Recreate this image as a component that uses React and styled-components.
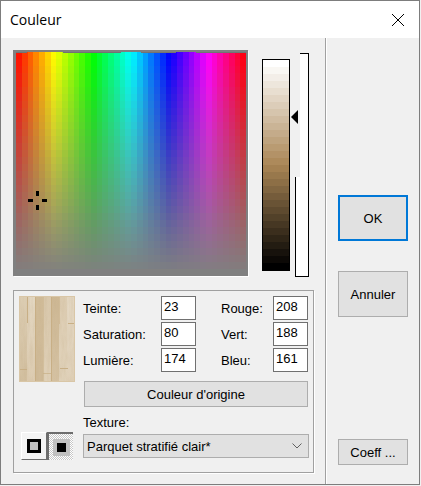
import { Fragment } from "react";
import styled, { createGlobalStyle } from "styled-components";

const GlobalStyle = createGlobalStyle`
  html, body {
    margin: 0;
    padding: 0;
    background: #f1f1f1;
  }
  * {
    box-sizing: border-box;
  }
`;

const Page = styled.div`
  width: 421px;
  height: 486px;
  overflow: hidden;
`;
const Dialog = styled.div`
  width: 420px;
  height: 485px;
  display: flex;
  flex-direction: column;
  background: #f0f0f0;
  border: 1px solid #7d7d7d;
  font-family: "Liberation Sans", Arial, sans-serif;
  font-size: 13px;
  color: #000;
`;
const TitleBar = styled.div`
  height: 37px;
  flex: none;
  background: #fff;
  display: flex;
  align-items: center;
  justify-content: space-between;
  padding: 0 14px 0 9px;
`;
const TitleText = styled.span`
  font-family: "Open Sans", sans-serif;
  font-size: 14px;
  color: #000;
`;
const Body = styled.div`
  flex: 1;
  display: flex;
  min-height: 0;
`;
const LeftPane = styled.div`
  width: 325px;
  flex: none;
  padding: 12px 0 0 12px;
  border-right: 1px solid #a0a0a0;
  box-shadow: 1px 0 0 #fff;
`;
const RightPane = styled.div`
  flex: 1;
  display: flex;
  flex-direction: column;
  padding: 157px 11px 19px 12px;
`;
const PickerRow = styled.div`
  display: flex;
  align-items: flex-start;
`;
const FieldFrame = styled.div`
  position: relative;
  width: 235px;
  height: 226px;
  flex: none;
  border-style: solid;
  border-color: #808080;
  border-width: 2px 2px 1px 3px;
  box-shadow: 1px 1px 0 #fff;
  background: #808080;
`;
const Drawing = styled.svg`
  display: block;
`;
const Crosshair = styled.svg`
  position: absolute;
  left: 12px;
  top: 139px;
`;
const LumStrip = styled.div`
  margin: 9px 0 0 14px;
  width: 28px;
  height: 212px;
  flex: none;
  border: 1px solid #000;
  display: flex;
  flex-direction: column;
  overflow: hidden;
`;
const LumBand = styled.div`
  flex: 1;
  background: ${(p) => p.$color};
`;
const SliderTrack = styled.div`
  position: relative;
  margin: 3px 0 0 5px;
  width: 14px;
  height: 224px;
  flex: none;
  display: flex;
  flex-direction: column;
`;
const SliderTop = styled.div`
  height: 124px;
  margin-left: 5px;
  background: #fff;
  border-top: 1px solid #000;
  border-right: 1px solid #000;
`;
const SliderBottom = styled.div`
  flex: 1;
  background: #fff;
  border: 1px solid #000;
  border-top: 0;
`;
const SliderArrow = styled.div`
  position: absolute;
  left: -4px;
  top: 57px;
  width: 0;
  height: 0;
  border-style: solid;
  border-width: 7px 7px 7px 0;
  border-color: transparent #000 transparent transparent;
`;
const GroupBox = styled.div`
  margin: 13px 0 0 0;
  width: 301px;
  height: 183px;
  border: 1px solid #a0a0a0;
  box-shadow: 1px 1px 0 #fff;
  padding: 5px;
  display: grid;
  grid-template-columns: 56px 1fr;
  column-gap: 8px;
`;
const SwatchColumn = styled.div`
  display: flex;
  flex-direction: column;
  justify-content: space-between;
  align-items: flex-start;
`;
const ModeButtons = styled.div`
  display: flex;
  margin: 0 0 7px 2px;
`;
const ModeButton = styled.div`
  width: 26px;
  height: 28px;
  display: flex;
  align-items: center;
  justify-content: center;
  background: ${(p) =>
    p.$pressed
      ? "repeating-conic-gradient(#c8c8c8 0 25%, #fff 0 50%) 0 0 / 2px 2px"
      : "#f4f4f4"};
  border-style: solid;
  border-width: ${(p) => (p.$pressed ? "2px 0 0 2px" : "1px")};
  border-color: ${(p) => (p.$pressed ? "#6d6d6d" : "#fff #6d6d6d #6d6d6d #fff")};
`;
const ModeIcon = styled.div`
  width: ${(p) => (p.$pressed ? "9px" : "14px")};
  height: ${(p) => (p.$pressed ? "9px" : "14px")};
  background: ${(p) => (p.$pressed ? "#000" : "#c0c0c0")};
  border: ${(p) => (p.$pressed ? "0" : "3px solid #000")};
  box-shadow: ${(p) => (p.$pressed ? "0 0 0 4px #c0c0c0" : "none")};
`;
const Controls = styled.div`
  display: flex;
  flex-direction: column;
  min-width: 0;
`;
const ValueGrid = styled.div`
  display: grid;
  grid-template-columns: 78px 35px 25px 52px 35px;
  grid-auto-rows: 26px;
`;
const FieldLabel = styled.label`
  display: flex;
  align-items: center;
  grid-column: ${(p) => p.$column};
  padding-bottom: 1px;
`;
const ValueBox = styled.div`
  height: 24px;
  background: #fff;
  border: 1px solid #707070;
  padding: 0 0 3px 2px;
  display: flex;
  align-items: center;
  font-size: 13px;
`;
const FlatButton = styled.button`
  display: block;
  font: inherit;
  color: #000;
  background: #e1e1e1;
  border: ${(p) => (p.$focused ? "2px solid #0078d7" : "1px solid #adadad")};
  padding: 0;
  width: ${(p) => p.$width || "70px"};
  height: ${(p) => p.$height || "46px"};
  margin: ${(p) => p.$margin || "0"};
`;
const TextureLabel = styled.div`
  margin: 8px 0 0 0;
  height: 15px;
  line-height: 15px;
`;
const Combo = styled.div`
  margin: 4px 0 0 0;
  width: 226px;
  height: 24px;
  background: #e1e1e1;
  border: 1px solid #adadad;
  display: flex;
  align-items: center;
  justify-content: space-between;
  padding: 0 6px 0 3px;
`;

const hsl = (h, s, l) => `hsl(${h} ${s}% ${l}%)`;

const topGaps = [
  [0, 11],
  [47, 105],
  [125, 160],
  [180, 230],
];

const SpectrumField = () => {
  const cols = 40;
  const rows = 32;
  const cells = [];
  for (let r = 0; r < rows; r++) {
    for (let c = 0; c < cols; c++) {
      const hue = ((c + 0.5) / cols) * 360;
      const sat = 100 - (r / (rows - 1)) * 100;
      cells.push(
        <rect
          key={`${r}-${c}`}
          x={c * 5.75}
          y={r * 7}
          width="5.9"
          height="7.1"
          fill={hsl(hue, sat, 50)}
        />
      );
    }
  }
  return (
    <Drawing width="230" height="223" viewBox="0 0 230 223" shapeRendering="crispEdges">
      {cells}
      {topGaps.map(([a, b]) => (
        <rect key={a} x={a} y="0" width={b - a} height="1" fill="#737373" />
      ))}
    </Drawing>
  );
};

const WoodTexture = () => {
  const planks = [
    [0, "#dccdb3", "#d2bf9f"],
    [8, "#e3d7c2", "#dccbb0"],
    [16, "#d0bb98", "#cfba98"],
    [24, "#d9c8ac", "#dfd0b7"],
    [32, "#cdb793", "#d5c2a3"],
    [40, "#ddcdb3", "#e0d2ba"],
    [48, "#e4d8c4", "#dfd0b8"],
  ];
  return (
    <Drawing width="56" height="86" viewBox="0 0 56 86">
      <defs>
        {planks.map(([x, a, b]) => (
          <linearGradient key={x} id={`plank${x}`} x1="0" y1="0" x2="0" y2="1">
            <stop offset="0" stopColor={a} />
            <stop offset="1" stopColor={b} />
          </linearGradient>
        ))}
        <filter id="grain" x="0" y="0" width="100%" height="100%">
          <feTurbulence type="fractalNoise" baseFrequency="0.35 0.06" numOctaves="3" seed="4" />
          <feColorMatrix values="0 0 0 0 0.55 0 0 0 0 0.42 0 0 0 0 0.25 0.9 0 0 0 -0.28" />
        </filter>
      </defs>
      {planks.map(([x]) => (
        <rect key={x} x={x} y="0" width="8" height="86" fill={`url(#plank${x})`} />
      ))}
      <rect width="56" height="86" filter="url(#grain)" opacity="0.45" />
      <g shapeRendering="crispEdges" fill="#c8af86">
        <rect x="8" y="0" width="1" height="27" />
        <rect x="16" y="0" width="1" height="86" />
        <rect x="24" y="0" width="1" height="86" opacity="0.5" />
        <rect x="32" y="0" width="1" height="86" />
        <rect x="40" y="0" width="1" height="28" opacity="0.6" />
        <rect x="0" y="73" width="8" height="1" />
        <rect x="41" y="72" width="8" height="1" />
        <rect x="49" y="27" width="7" height="1" />
        <rect x="24" y="77" width="8" height="1" opacity="0.7" />
      </g>
      <rect x="0.5" y="0.5" width="55" height="85" fill="none" stroke="#d9c6a6" />
    </Drawing>
  );
};

const lumBands = Array.from({ length: 30 }, (_, i) =>
  hsl(34.5, 33.3, 100 - (i / 29) * 100)
);

const values = [
  ["Teinte:", "23", "Rouge:", "208"],
  ["Saturation:", "80", "Vert:", "188"],
  ["Lumière:", "174", "Bleu:", "161"],
];

const App = () => (
  <>
    <GlobalStyle />
    <Page>
      <Dialog>
        <TitleBar>
          <TitleText>Couleur</TitleText>
          <svg width="14" height="14" viewBox="0 0 14 14">
            <path d="M1 1 L13 13 M13 1 L1 13" stroke="#000" strokeWidth="1" fill="none" />
          </svg>
        </TitleBar>
        <Body>
          <LeftPane>
            <PickerRow>
              <FieldFrame>
                <SpectrumField />
                <Crosshair width="19" height="19" viewBox="0 0 19 19">
                  <path d="M8 0h3v5H8zM8 14h3v5H8zM0 8h5v3H0zM14 8h5v3h-5z" fill="#000" />
                </Crosshair>
              </FieldFrame>
              <LumStrip>
                {lumBands.map((c, i) => (
                  <LumBand key={i} $color={c} />
                ))}
              </LumStrip>
              <SliderTrack>
                <SliderTop />
                <SliderBottom />
                <SliderArrow />
              </SliderTrack>
            </PickerRow>
            <GroupBox>
              <SwatchColumn>
                <WoodTexture />
                <ModeButtons>
                  <ModeButton>
                    <ModeIcon />
                  </ModeButton>
                  <ModeButton $pressed>
                    <ModeIcon $pressed />
                  </ModeButton>
                </ModeButtons>
              </SwatchColumn>
              <Controls>
                <ValueGrid>
                  {values.map(([a, b, c, d]) => (
                    <Fragment key={a}>
                      <FieldLabel $column="1">{a}</FieldLabel>
                      <ValueBox>{b}</ValueBox>
                      <FieldLabel $column="4">{c}</FieldLabel>
                      <ValueBox>{d}</ValueBox>
                    </Fragment>
                  ))}
                </ValueGrid>
                <FlatButton $width="224px" $height="26px" $margin="7px 0 0 1px">
                  Couleur d'origine
                </FlatButton>
                <TextureLabel>Texture:</TextureLabel>
                <Combo>
                  <span>Parquet stratifié clair*</span>
                  <svg width="10" height="6" viewBox="0 0 10 6">
                    <path d="M0.5 0.5 L5 5 L9.5 0.5" stroke="#606060" fill="none" />
                  </svg>
                </Combo>
              </Controls>
            </GroupBox>
          </LeftPane>
          <RightPane>
            <FlatButton $focused>OK</FlatButton>
            <FlatButton $margin="30px 0 0 0">Annuler</FlatButton>
            <FlatButton $height="26px" $margin="auto 0 0 0">Coeff ...</FlatButton>
          </RightPane>
        </Body>
      </Dialog>
    </Page>
  </>
);

export default App;
